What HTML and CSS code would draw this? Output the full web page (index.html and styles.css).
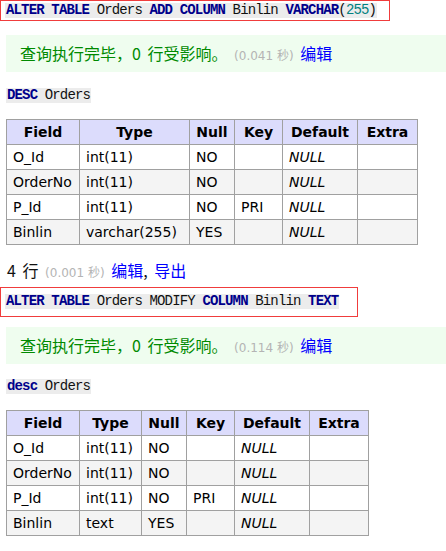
FILE: index.html
```html
<!DOCTYPE html>
<html>
<head>
<meta charset="utf-8">
<link rel="stylesheet" href="styles.css">
</head>
<body>
<div class="page">
  <div class="sql sql-first sql-w1"><code class="code"><b class="kw">ALTER</b> <b class="kw">TABLE</b> Orders <b class="kw">ADD</b> <b class="kw">COLUMN</b> Binlin <b class="kw">VARCHAR</b>(<span class="num">255</span>)</code></div>
  <div class="result result-1"><span class="ok">查询执行完毕，0 行受影响。</span> <span class="time">(0.041 秒)</span> <a class="link">编辑</a></div>
  <div class="query q1"><code class="code"><b class="kw">DESC</b> Orders</code></div>
  <table class="grid t1">
    <colgroup><col class="c-field"><col class="c-type1"><col class="c-null"><col class="c-key"><col class="c-def"><col class="c-extra1"></colgroup>
    <thead><tr><th>Field</th><th>Type</th><th>Null</th><th>Key</th><th>Default</th><th>Extra</th></tr></thead>
    <tbody>
      <tr><td>O_Id</td><td>int(11)</td><td>NO</td><td></td><td><i>NULL</i></td><td></td></tr>
      <tr><td>OrderNo</td><td>int(11)</td><td>NO</td><td></td><td><i>NULL</i></td><td></td></tr>
      <tr><td>P_Id</td><td>int(11)</td><td>NO</td><td>PRI</td><td><i>NULL</i></td><td></td></tr>
      <tr><td>Binlin</td><td>varchar(255)</td><td>YES</td><td></td><td><i>NULL</i></td><td></td></tr>
    </tbody>
  </table>
  <div class="rows">4 行 <span class="time">(0.001 秒)</span> <a class="link">编辑</a>, <a class="link">导出</a></div>
  <div class="sql sql-second sql-w2"><code class="code"><b class="kw">ALTER</b> <b class="kw">TABLE</b> Orders MODIFY <b class="kw">COLUMN</b> Binlin <b class="kw">TEXT</b></code></div>
  <div class="result result-2"><span class="ok">查询执行完毕，0 行受影响。</span> <span class="time">(0.114 秒)</span> <a class="link">编辑</a></div>
  <div class="query q2"><code class="code"><b class="kw">desc</b> Orders</code></div>
  <table class="grid t2">
    <colgroup><col class="c-field"><col class="c-type2"><col class="c-null"><col class="c-key"><col class="c-def"><col class="c-extra2"></colgroup>
    <thead><tr><th>Field</th><th>Type</th><th>Null</th><th>Key</th><th>Default</th><th>Extra</th></tr></thead>
    <tbody>
      <tr><td>O_Id</td><td>int(11)</td><td>NO</td><td></td><td><i>NULL</i></td><td></td></tr>
      <tr><td>OrderNo</td><td>int(11)</td><td>NO</td><td></td><td><i>NULL</i></td><td></td></tr>
      <tr><td>P_Id</td><td>int(11)</td><td>NO</td><td>PRI</td><td><i>NULL</i></td><td></td></tr>
      <tr><td>Binlin</td><td>text</td><td>YES</td><td></td><td><i>NULL</i></td><td></td></tr>
    </tbody>
  </table>
</div>
</body>
</html>
```
FILE: styles.css
```css
html, body {
  margin: 0;
  padding: 0;
  background: #fff;
}
.page {
  display: flex;
  flex-direction: column;
  align-items: flex-start;
  font-family: "DejaVu Sans", Verdana, sans-serif;
  color: #000;
}
.sql {
  display: flex;
  box-sizing: border-box;
  border: 1px solid #f03c3c;
  padding-left: 4px;
}
.sql-first {
  padding-top: 2px;
  padding-bottom: 2px;
}
.sql-second {
  margin-top: 7px;
  padding-top: 6px;
  padding-bottom: 7px;
}
.sql-w1 { width: 390px; }
.sql-w2 { width: 358px; }
.code {
  display: block;
  background: #ececec;
  font-family: "Liberation Mono", "Courier New", monospace;
  font-size: 14px;
  letter-spacing: -0.85px;
  line-height: 15px;
  height: 15px;
  padding: 0 1px;
  color: #111;
  white-space: pre;
}
.kw {
  color: #00008b;
  font-weight: bold;
}
.num {
  color: #008080;
}
.result {
  align-self: stretch;
  margin-left: 6px;
  height: 37px;
  line-height: 37px;
  padding-left: 14px;
  background: #effdef;
  font-family: "Noto Sans CJK SC", sans-serif;
  font-size: 16px;
  word-spacing: 3px;
  white-space: nowrap;
}
.result-1 { margin-top: 14px; }
.result-2 { margin-top: 10px; }
.ok {
  color: #008a00;
}
.time {
  font-family: "DejaVu Sans", "Noto Sans CJK SC", sans-serif;
  font-size: 12px;
  word-spacing: 0;
  color: #b4b4b4;
}
.link {
  color: #0000ff;
  font-family: "Noto Sans CJK SC", sans-serif;
  font-size: 16px;
  text-decoration: none;
  cursor: pointer;
}
.query {
  display: flex;
  margin-left: 6px;
}
.q1 { margin-top: 16px; }
.q2 { margin-top: 15px; }
.grid {
  margin-left: 6px;
  margin-top: 16px;
  border-collapse: collapse;
  table-layout: fixed;
  font-size: 14px;
}
.grid th, .grid td {
  border: 1px solid #a0a0a0;
  height: 25px;
  padding: 0 0 0 6px;
  text-align: left;
  white-space: nowrap;
  overflow: hidden;
  box-sizing: border-box;
}
.grid th {
  background: #dcdcfc;
  font-weight: bold;
  text-align: center;
  padding: 0;
}
.grid tbody tr:nth-child(even) td {
  background: #f4f4f4;
}
.grid i {
  font-style: italic;
}
.t1 { width: 412px; }
.t2 { width: 363px; }
.c-field { width: 73px; }
.c-type1 { width: 110px; }
.c-type2 { width: 62px; }
.c-null { width: 45px; }
.c-key { width: 48px; }
.c-def { width: 75px; }
.c-extra1 { width: 60px; }
.c-extra2 { width: 59px; }
.rows {
  margin-left: 7px;
  margin-top: 15px;
  height: 20px;
  line-height: 20px;
  font-family: "Noto Sans CJK SC", sans-serif;
  font-size: 16px;
  word-spacing: 3px;
  color: #111;
  white-space: nowrap;
}
```
